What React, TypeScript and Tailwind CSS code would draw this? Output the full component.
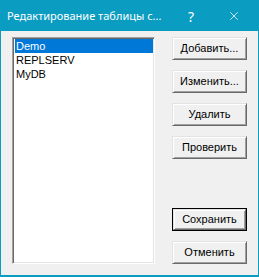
import { X } from 'lucide-react';

const items = ['Demo', 'REPLSERV', 'MyDB'];

function Btn({ label, isDefault = false }: { label: string; isDefault?: boolean }) {
  return (
    <div className={isDefault ? 'h-[23px] border border-black' : 'h-[23px]'}>
      <button
        className="w-full h-full flex items-center justify-center bg-[#f0f0f0] text-black text-[11px] border border-t-[#e3e3e3] border-l-[#e3e3e3] border-r-[#696969] border-b-[#696969] shadow-[inset_1px_1px_0_#ffffff,inset_-1px_-1px_0_#a0a0a0]"
        style={{ fontFamily: '"Liberation Sans", Arial, sans-serif' }}
      >
        {label}
      </button>
    </div>
  );
}

export default function App() {
  return (
    <div className="w-[259px] h-[277px] flex flex-col bg-[#0b9cc1] border border-[#0b9cc1] border-b-2 overflow-hidden">
      <div className="h-[30px] flex items-center text-white shrink-0" style={{ fontFamily: '"Noto Sans", "Open Sans", sans-serif' }}>
        <span className="pl-[6px] text-[11px] whitespace-nowrap shrink-0">Редактирование таблицы с...</span>
        <div className="flex-1" />
        <span className="w-[30px] text-center text-[14px] shrink-0">?</span>
        <div className="w-[30px] ml-[13px] mr-[9px] flex justify-center shrink-0">
          <X className="w-[14px] h-[14px]" strokeWidth={1.3} />
        </div>
      </div>
      <div className="flex-1 bg-[#f0f0f0] flex pl-[11px] pt-[6px]">
        <div
          className="w-[143px] h-[227px] bg-white border border-t-[#a0a0a0] border-l-[#a0a0a0] border-r-white border-b-white shadow-[inset_1px_1px_0_#696969,inset_-1px_-1px_0_#e3e3e3] pt-[1px] pl-[2px] pr-[1px]"
          style={{ fontFamily: '"Liberation Sans", Arial, sans-serif' }}
        >
          {items.map((it, i) => (
            <div
              key={it}
              className={
                i === 0
                  ? 'h-[14px] leading-[14px] text-[11px] pl-[1px] bg-[#0078d7] text-white'
                  : 'h-[14px] leading-[14px] text-[11px] pl-[1px] text-black'
              }
            >
              {it}
            </div>
          ))}
        </div>
        <div className="ml-[17px] w-[75px] h-[227px] flex flex-col">
          <div className="flex flex-col gap-[10px]">
            <Btn label="Добавить..." />
            <Btn label="Изменить..." />
            <Btn label="Удалить" />
            <Btn label="Проверить" />
          </div>
          <div className="mt-auto flex flex-col gap-[10px]">
            <Btn label="Сохранить" isDefault />
            <Btn label="Отменить" />
          </div>
        </div>
      </div>
    </div>
  );
}
